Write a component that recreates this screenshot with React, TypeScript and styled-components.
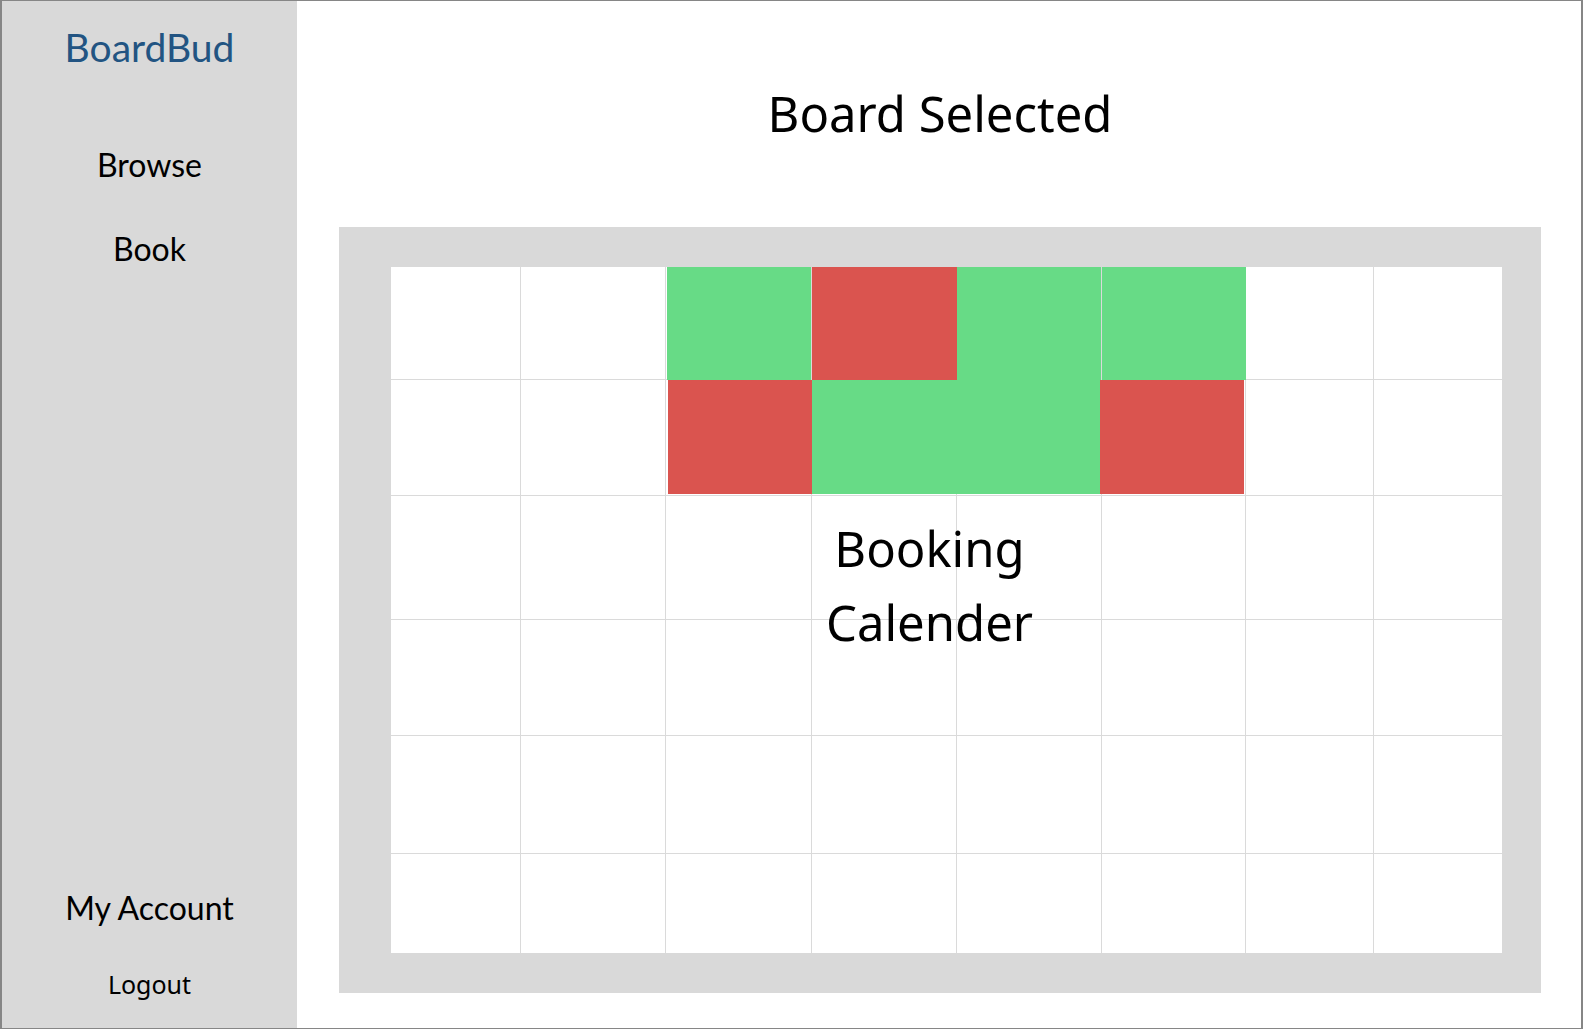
import React from "react";
import styled, { createGlobalStyle } from "styled-components";

const GlobalStyle = createGlobalStyle`
  *, *::before, *::after { box-sizing: border-box; }
  body { margin: 0; background: #fff; }
`;

const SANS = `"Noto Sans", "Open Sans", sans-serif`;
const HAND = `Lato, cursive`;

const LINE = "#dadada";
const FREE = "#67db86";
const TAKEN = "#da544f";

const Page = styled.div`
  display: flex;
  min-height: 100vh;
  border: solid #868686;
  border-width: 1px 2px;
  background: #fff;
  color: #000;
  font-family: ${SANS};
`;

const Sidebar = styled.aside`
  display: flex;
  flex-direction: column;
  align-items: center;
  flex: 0 0 295px;
  padding: 16px 0 20px;
  background: #d9d9d9;
`;

const Brand = styled.a`
  color: #225482;
  font: 39px/60px ${HAND};
  text-decoration: none;
`;

const Nav = styled.nav`
  display: flex;
  flex-direction: column;
  align-items: center;
  gap: 36px;
  margin-top: 64px;
`;

const Account = styled(Nav)`
  gap: 28px;
  margin-top: auto;
`;

const NavLink = styled.a`
  color: #000;
  font: 32px/48px ${HAND};
  text-decoration: none;
`;

const Logout = styled.button`
  padding: 0;
  border: 0;
  background: none;
  color: #000;
  font: 25px/48px ${SANS};
  cursor: pointer;
`;

const Main = styled.main`
  display: flex;
  flex: 1;
  flex-direction: column;
  min-width: 0;
  padding: 0 40px 35px 42px;
`;

const Title = styled.h1`
  margin: 0;
  padding: 75px 0 77px;
  font-size: 49px;
  font-weight: 400;
  line-height: 74px;
  text-align: center;
`;

const Board = styled.section`
  display: flex;
  flex: 1;
  padding: 40px 39px 40px 52px;
  background: #d9d9d9;
`;

const Calendar = styled.div`
  position: relative;
  display: grid;
  flex: 1;
  grid-template-columns: 130fr 145fr 146fr 145fr 145fr 144fr 128fr 128fr;
  grid-template-rows: 113fr 116fr 124fr 116fr 118fr 99fr;
  background: #fff;
`;

const Day = styled.div<{ $lastCol: boolean; $lastRow: boolean }>`
  display: flex;
  border: 0 solid ${LINE};
  border-right-width: ${(p) => (p.$lastCol ? 0 : 1)}px;
  border-bottom-width: ${(p) => (p.$lastRow ? 0 : 1)}px;
`;

const Slot = styled.div<{ $free: boolean; $margin: string }>`
  flex: 1;
  margin: ${(p) => p.$margin};
  background: ${(p) => (p.$free ? FREE : TAKEN)};
`;

const CalendarLabel = styled.p`
  position: absolute;
  inset: 0 34px 0 0;
  display: flex;
  align-items: center;
  justify-content: center;
  margin: 0;
  padding-bottom: 50px;
  font-size: 49px;
  line-height: 74px;
  text-align: center;
  pointer-events: none;
`;

const COLS = 8;
const ROWS = 6;

// Booked and open slots, keyed by "row-column".
const slots: Record<string, { free: boolean; margin: string }> = {
  "0-2": { free: true, margin: "0 0 -1px 1px" },
  "0-3": { free: false, margin: "0 -1px -1px 0" },
  "0-4": { free: true, margin: "0 0 -1px" },
  "0-5": { free: true, margin: "0 -1px -1px 0" },
  "1-2": { free: false, margin: "0 -1px 1px 2px" },
  "1-3": { free: true, margin: "0 -1px 1px 0" },
  "1-4": { free: true, margin: "0 -1px 1px 0" },
  "1-5": { free: false, margin: "0 1px 1px -2px" },
};

export default function App() {
  const days = Array.from({ length: ROWS * COLS }, (_, i) => ({
    row: Math.floor(i / COLS),
    col: i % COLS,
  }));

  return (
    <>
      <GlobalStyle />
      <Page>
        <Sidebar>
          <Brand href="#">BoardBud</Brand>
          <Nav>
            <NavLink href="#browse">Browse</NavLink>
            <NavLink href="#book">Book</NavLink>
          </Nav>
          <Account>
            <NavLink href="#account">My Account</NavLink>
            <Logout type="button">Logout</Logout>
          </Account>
        </Sidebar>
        <Main>
          <Title>Board Selected</Title>
          <Board>
            <Calendar>
              {days.map(({ row, col }) => {
                const slot = slots[`${row}-${col}`];
                return (
                  <Day
                    key={`${row}-${col}`}
                    $lastCol={col === COLS - 1}
                    $lastRow={row === ROWS - 1}
                  >
                    {slot && <Slot $free={slot.free} $margin={slot.margin} />}
                  </Day>
                );
              })}
              <CalendarLabel>
                Booking
                <br />
                Calender
              </CalendarLabel>
            </Calendar>
          </Board>
        </Main>
      </Page>
    </>
  );
}
